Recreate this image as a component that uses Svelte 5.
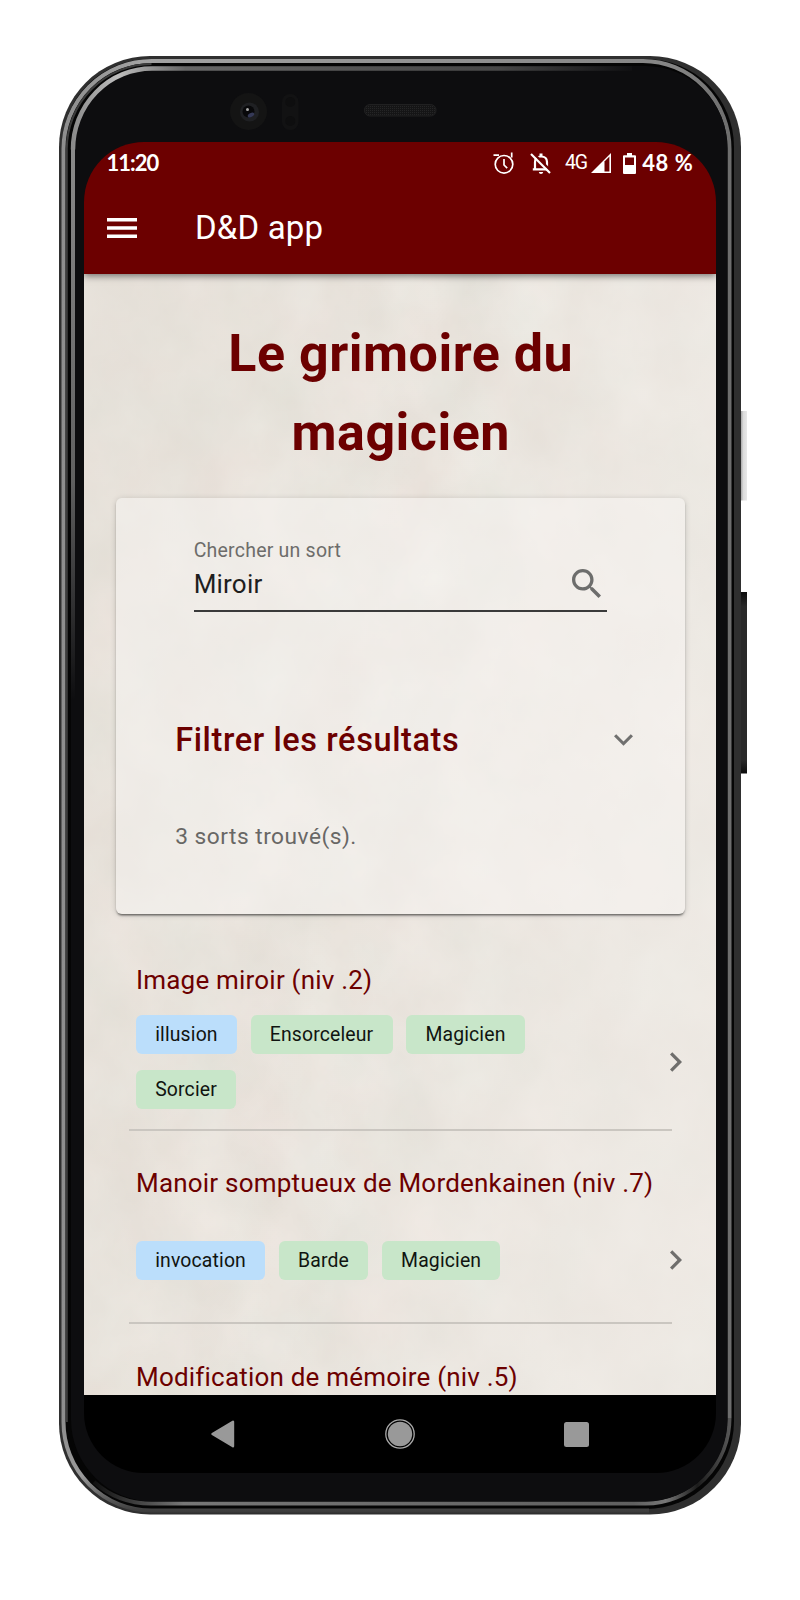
<script>
  const spells = [
    { title: 'Image miroir (niv .2)', school: 'illusion', classes: ['Ensorceleur', 'Magicien', 'Sorcier'] },
    { title: 'Manoir somptueux de Mordenkainen (niv .7)', school: 'invocation', classes: ['Barde', 'Magicien'] },
    { title: 'Modification de mémoire (niv .5)', school: null, classes: [] }
  ];
</script>

<div class="stage">
  <svg class="device" width="800" height="1600" viewBox="0 0 800 1600" aria-hidden="true">
    <defs>
      <linearGradient id="rail" x1="59" x2="741" y1="0" y2="0" gradientUnits="userSpaceOnUse">
        <stop offset="0" stop-color="#8d8d8d" />
        <stop offset="0.12" stop-color="#a2a2a2" />
        <stop offset="0.9" stop-color="#858585" />
        <stop offset="1" stop-color="#696969" />
      </linearGradient>
      <linearGradient id="inner" x1="72" x2="640" y1="0" y2="0" gradientUnits="userSpaceOnUse">
        <stop offset="0" stop-color="#8a8a8a" />
        <stop offset="0.08" stop-color="#bdbdbd" />
        <stop offset="0.2" stop-color="#666" />
        <stop offset="0.75" stop-color="#484848" />
        <stop offset="1" stop-color="#0d0d0f" />
      </linearGradient>
      <linearGradient id="innerSide" x1="0" x2="0" y1="150" y2="700" gradientUnits="userSpaceOnUse">
        <stop offset="0" stop-color="#8a8a8a" />
        <stop offset="0.6" stop-color="#606060" />
        <stop offset="1" stop-color="#0d0d0f" />
      </linearGradient>
      <linearGradient id="foot" x1="95" x2="729" y1="0" y2="0" gradientUnits="userSpaceOnUse">
        <stop offset="0" stop-color="#111" />
        <stop offset="0.14" stop-color="#777" />
        <stop offset="0.85" stop-color="#606060" />
        <stop offset="0.9" stop-color="#777" />
        <stop offset="0.95" stop-color="#1c1c1c" />
        <stop offset="1" stop-color="#555" />
      </linearGradient>
      <linearGradient id="footOuter" x1="0" x2="0" y1="1422" y2="1511" gradientUnits="userSpaceOnUse">
        <stop offset="0" stop-color="#8d8d8d" />
        <stop offset="0.6" stop-color="#9a9a9a" />
        <stop offset="1" stop-color="#3c3c3c" />
      </linearGradient>
      <linearGradient id="silver" x1="741" x2="747" y1="0" y2="0" gradientUnits="userSpaceOnUse">
        <stop offset="0" stop-color="#aaa" />
        <stop offset="0.4" stop-color="#dcdcdc" />
        <stop offset="1" stop-color="#e8e8e8" />
      </linearGradient>
      <linearGradient id="power" x1="0" x2="0" y1="592" y2="773" gradientUnits="userSpaceOnUse">
        <stop offset="0" stop-color="#0d0d0d" />
        <stop offset="0.08" stop-color="#292929" />
        <stop offset="0.93" stop-color="#292929" />
        <stop offset="1" stop-color="#0d0d0d" />
      </linearGradient>
      <pattern id="mesh" width="2" height="2" patternUnits="userSpaceOnUse">
        <rect width="2" height="2" fill="#151516" />
        <rect width="1" height="1" fill="#252526" />
      </pattern>
    </defs>
    <rect x="740" y="411" width="7" height="89.5" fill="url(#silver)" />
    <rect x="740" y="592" width="7" height="181.5" fill="url(#power)" />
    <rect x="59" y="56" width="682" height="1458.5" rx="91" fill="#2f2f2f" />
    <rect x="62" y="59" width="672" height="1450" rx="88" fill="#050505" />
    <path d="M63.500 1422V149A88 88 0 0 1 151.500 61H643A86.500 88 0 0 1 729.500 149V1418" fill="none" stroke="url(#rail)" stroke-width="4" />
    <path d="M66.800 1422V149A85 85 0 0 1 151.500 64" fill="none" stroke="#3c3c3c" stroke-width="2" />
    <path d="M63.500 1422A88 88.500 0 0 0 151.500 1510.500H649" fill="none" stroke="url(#footOuter)" stroke-width="4" />
    <path d="M729.500 1418A84 85.500 0 0 1 645 1503.500H151Q118 1503.500 94 1482" fill="none" stroke="url(#foot)" stroke-width="4" />
    <rect x="71" y="66" width="656.500" height="1435.500" rx="82" fill="#0d0d0f" />
    <path d="M73 700V149" fill="none" stroke="url(#innerSide)" stroke-width="4" />
    <path d="M73 149.500A79 81 0 0 1 152 68.500H632" fill="none" stroke="url(#inner)" stroke-width="4.500" />
    <circle cx="248.500" cy="111.500" r="18.500" fill="#141414" />
    <circle cx="249.500" cy="112" r="9.500" fill="#1f2023" />
    <circle cx="248.500" cy="111.500" r="6" fill="#08080a" />
    <ellipse cx="251" cy="115" rx="3.500" ry="2" fill="#353957" transform="rotate(-28 251 115)" />
    <circle cx="247.500" cy="109.500" r="1.500" fill="#aaa" />
    <rect x="282" y="94" width="16.500" height="36" rx="8" fill="#121213" />
    <circle cx="290.300" cy="102" r="5" fill="#0e0e0f" />
    <circle cx="290.300" cy="121" r="5" fill="#0e0e0f" />
    <rect x="364.500" y="104.500" width="71.500" height="11.500" rx="5.500" fill="url(#mesh)" stroke="#202021" />
  </svg>

  <main class="screen">
    <header>
      <div class="status">
        <span class="clock">11:20</span>
        <svg class="alarm" width="22" height="23" viewBox="0 0 22 23" fill="none" stroke="#fff" stroke-width="1.700">
          <circle cx="11" cy="12.300" r="8.800" />
          <path d="M11 7v6l3.200 3.200M.5 3.200H6M18.700.5v5" />
        </svg>
        <svg class="bell" width="22" height="23" viewBox="0 0 22 23">
          <path d="M5 17V10Q5 4.500 11 4.500Q17 4.500 17 10V17" fill="none" stroke="#fff" stroke-width="2.200" />
          <path d="M9.500 1.500h3v3h-3zM2.800 16.200h16.400v2.200H2.800zM8.800 20h4.400q-.3 2-2.200 2t-2.200-2z" fill="#fff" />
          <path d="M3.200 1.200L21.500 19.500" stroke="#6c0000" stroke-width="2.500" />
          <path d="M1 2L20 21" stroke="#fff" stroke-width="2.200" />
        </svg>
        <span class="network">4G</span>
        <svg class="signal" width="20" height="20" viewBox="0 0 20 20">
          <path d="M0 20L20 0V20Z" fill="#fff" />
          <path d="M13.500 8.500L18.400 3.500V18.400H13.500Z" fill="#6c0000" />
        </svg>
        <svg class="battery" width="13" height="21" viewBox="0 0 13 21">
          <path d="M4 0h5v2.200h3q1 0 1 1V20q0 1-1 1H1q-1 0-1-1V3.200q0-1 1-1h3z" fill="#fff" />
          <path d="M2 4.500h9v7.500H2z" fill="#6c0000" />
        </svg>
        <span class="percent">48 %</span>
      </div>
      <div class="bar">
        <svg width="30" height="20" viewBox="0 0 30 20"><path d="M0 0h30v3.600H0zM0 8.200h30v3.600H0zM0 16.400h30V20H0z" fill="#fff" /></svg>
        <span>D&amp;D app</span>
      </div>
    </header>

    <div class="content">
      <svg class="paper" width="632" height="1121" aria-hidden="true">
        <filter id="stains" x="0" y="0" width="100%" height="100%" color-interpolation-filters="sRGB">
          <feTurbulence type="fractalNoise" baseFrequency="0.014 0.012" numOctaves="5" seed="21" />
          <feColorMatrix values="0.055 0.025 0 0 0.874  0.055 0 0.025 0 0.855  0.065 0 0.02 0 0.825  0 0 0 0 1" />
        </filter>
        <rect width="632" height="1121" filter="url(#stains)" />
      </svg>
      <h1>Le grimoire du<br />magicien</h1>
      <section class="card">
        <div class="field">
          <div class="entry">
            <label for="search">Chercher un sort</label>
            <div class="value" id="search">Miroir</div>
          </div>
          <svg width="29" height="29" viewBox="3 3 17.490 17.490"><path d="M15.500 14h-.79l-.28-.27C15.410 12.590 16 11.110 16 9.500 16 5.910 13.090 3 9.500 3S3 5.910 3 9.500 5.910 16 9.500 16c1.610 0 3.090-.59 4.230-1.570l.27.280v.79l5 4.990L20.490 19l-4.990-5zm-6 0C7.010 14 5 11.990 5 9.500S7.010 5 9.500 5 14 7.010 14 9.500 11.990 14 9.500 14z" fill="#6d6d6c" /></svg>
        </div>
        <div class="filter">
          <h2>Filtrer les résultats</h2>
          <svg width="19" height="12" viewBox="6 8.590 12 7.410"><path d="M16.590 8.590L12 13.170 7.410 8.590 6 10l6 6 6-6z" fill="#70706f" /></svg>
        </div>
        <p>3 sorts trouvé(s).</p>
      </section>

      <ul>
        {#each spells as spell, i}
          <li class:first={i === 0}>
            <h3>{spell.title}</h3>
            {#if spell.school}
              <div class="row">
                <div class="chips">
                  <span class="chip school">{spell.school}</span>
                  {#each spell.classes as name}
                    <span class="chip">{name}</span>
                  {/each}
                </div>
                <svg width="12" height="20" viewBox="8.590 6 7.410 12"><path d="M10 6L8.590 7.410 13.170 12l-4.580 4.590L10 18l6-6z" fill="#6f6e6c" /></svg>
              </div>
            {/if}
          </li>
        {/each}
      </ul>
    </div>

    <nav>
      <svg width="24" height="28" viewBox="0 0 24 28"><path d="M1.500 14L22 1.800V26.200Z" fill="#999" stroke="#999" stroke-width="2.400" stroke-linejoin="round" /></svg>
      <svg width="30" height="30" viewBox="0 0 30 30"><circle cx="15" cy="15" r="14.200" fill="none" stroke="#aaa" stroke-width="1.300" /><circle cx="15" cy="15" r="12.200" fill="#999" /></svg>
      <svg width="25" height="25" viewBox="0 0 25 25"><rect width="25" height="25" rx="2.500" fill="#999" /></svg>
    </nav>
  </main>
</div>

<style>
  :global(body) { margin: 0; background: #fff; }
  .stage {
    position: relative;
    box-sizing: border-box;
    width: 800px;
    height: 1600px;
    padding: 142px 84px 0;
    overflow: hidden;
    font-family: Roboto, sans-serif;
  }
  .device { position: absolute; inset: 0; }
  svg { display: block; flex: none; }
  .screen {
    position: relative;
    display: flex;
    flex-direction: column;
    width: 631.5px;
    height: 1331px;
    overflow: hidden;
    border-radius: 60px;
  }
  .paper { position: absolute; inset: 0; z-index: -2; }
  .content::before {
    content: '';
    position: absolute;
    inset: 0;
    z-index: -1;
    background: linear-gradient(100deg, rgba(224, 218, 209, .35), rgba(255, 255, 255, 0) 45%, rgba(240, 236, 231, .6) 85%);
  }
  header {
    position: relative;
    z-index: 2;
    height: 132px;
    flex: none;
    background: #6c0000;
    color: #fff;
    box-shadow: 0 2px 7px rgba(0, 0, 0, .5);
  }
  .status {
    display: flex;
    align-items: center;
    height: 42px;
    padding: 0 22px 0 22.5px;
  }
  .clock, .percent { font: 700 22px/42px Lato, sans-serif; white-space: pre; }
  .clock { letter-spacing: -1px; margin-right: auto; }
  .percent { letter-spacing: .6px; margin-left: 6.5px; }
  .bell { margin-left: 15px; }
  .network { margin-left: 13px; font-size: 19.5px; line-height: 38px; letter-spacing: -1.3px; }
  .signal { margin-left: 4.5px; }
  .battery { margin-left: 11.5px; }
  .bar {
    display: flex;
    align-items: center;
    height: 88px;
    padding-left: 23px;
    gap: 58px;
    font-size: 33px;
    line-height: 40px;
    letter-spacing: .15px;
  }
  .content {
    position: relative;
    z-index: 1;
    height: 1121px;
    flex: none;
    box-sizing: border-box;
    padding-top: 39.5px;
    overflow: hidden;
    background: #e9e4dd;
    isolation: isolate;
  }
  h1 {
    margin: 0 0 26px;
    padding-left: 2px;
    color: #6c0000;
    text-align: center;
    font-size: 52px;
    line-height: 79.3px;
    font-weight: 700;
    letter-spacing: .5px;
  }
  .card {
    box-sizing: border-box;
    width: 569px;
    height: 416px;
    margin: 0 0 0 32px;
    padding: 41px 52.5px 0 59.2px;
    border-radius: 6px;
    background: rgba(248, 246, 244, .48);
    box-shadow: 0 3px 2px -2px rgba(0, 0, 0, .4), 0 2px 2px rgba(0, 0, 0, .2), 0 1px 6px rgba(0, 0, 0, .16);
  }
  .field {
    display: flex;
    align-items: flex-end;
    justify-content: space-between;
    box-sizing: border-box;
    width: 413px;
    height: 73px;
    margin-left: 18.5px;
    padding-right: 6px;
    padding-bottom: 12.5px;
    border-bottom: 2px solid #3a3a3a;
  }
  .entry { align-self: flex-start; }
  label { display: block; color: #6d6c6a; font-size: 19.5px; line-height: 24px; letter-spacing: .22px; }
  .value { margin-top: 5px; color: #1e1e1e; font-size: 26px; line-height: 32px; letter-spacing: .2px; }
  .filter {
    display: flex;
    align-items: center;
    justify-content: space-between;
    height: 50px;
    margin-top: 103px;
  }
  h2 { margin: 0; color: #6c0000; font-size: 32.5px; line-height: 50px; font-weight: 500; letter-spacing: .6px; }
  p { margin: 56.5px 0 0; color: #686765; font-size: 22.7px; line-height: 30px; letter-spacing: .5px; }
  ul { margin: 0; padding: 46px 44px 0 45px; list-style: none; }
  li { box-sizing: border-box; height: 193.3px; padding: 31.5px 0 0 7px; border-bottom: 2px solid #cac6c0; }
  li:last-child { padding-top: 32.5px; }
  li.first { height: 171px; padding-top: 0; }
  h3 { margin: 0; color: #6c0000; font-size: 26px; line-height: 40px; font-weight: 400; letter-spacing: .2px; white-space: nowrap; }
  .row { display: flex; align-items: center; justify-content: space-between; margin: 38.2px -10px 0 0; }
  .first .row { margin-top: 15px; }
  .chips { display: flex; flex-wrap: wrap; gap: 15.3px 13.7px; width: 440px; }
  .chip {
    padding: 0 19.2px;
    border-radius: 6px;
    background: #c8e6c9;
    color: #101410;
    font-size: 19.4px;
    line-height: 39.3px;
    letter-spacing: .15px;
  }
  .chip.school { background: #bbdefb; }
  nav {
    position: relative;
    z-index: 2;
    display: grid;
    grid-template-columns: 277px 77px 277.5px;
    justify-items: center;
    align-items: center;
    height: 78px;
    background: #000;
  }
</style>
